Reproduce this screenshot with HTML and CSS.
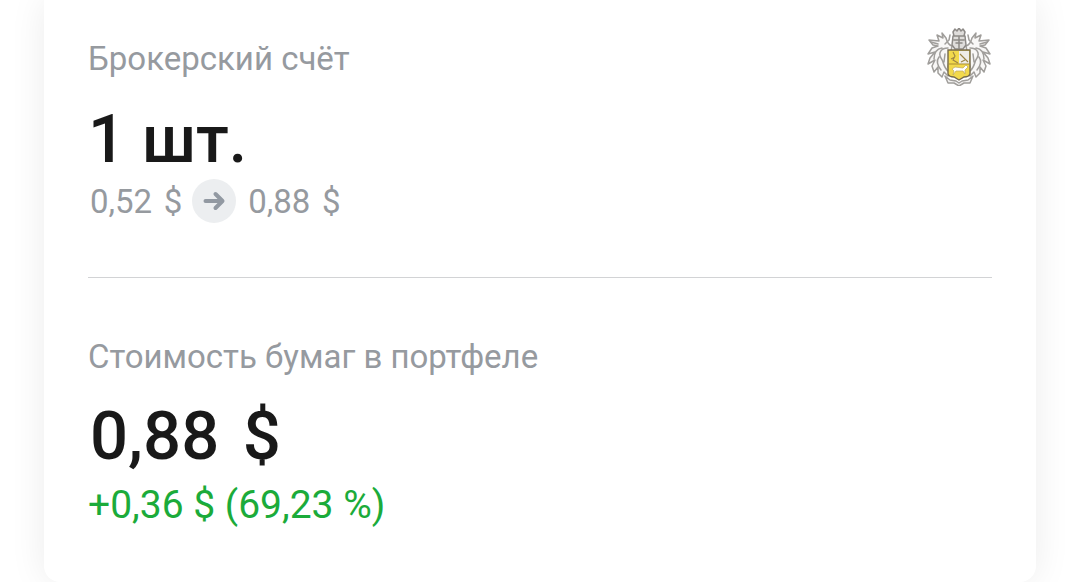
FILE: index.html
```html
<!DOCTYPE html>
<html lang="ru">
<head>
<meta charset="utf-8">
<title>Брокерский счёт</title>
<link rel="stylesheet" href="styles.css">
</head>
<body>
<main class="card">
  <section class="account">
    <div class="account-info">
      <h2 class="label">Брокерский счёт</h2>
      <p class="value count">1 шт.</p>
      <p class="prices">
        <span class="amount">0,52 &#8202;$</span>
        <svg class="arrow" viewBox="0 0 44 44" aria-hidden="true">
          <circle cx="22" cy="22" r="22" fill="#eceef0"/>
          <path d="M13.500 22H30M23.500 15L30.500 22L23.500 29" fill="none" stroke="#9299a2" stroke-width="4" stroke-linecap="round" stroke-linejoin="round"/>
        </svg>
        <span class="amount">0,88 &#8202;$</span>
      </p>
    </div>
    <svg class="crest" viewBox="0 0 64 58" aria-hidden="true">
      <g fill="none" stroke="#a09e9b" stroke-width="1.500" stroke-linejoin="round" stroke-linecap="round">
        <g id="mantle">
          <path fill="#f8f7f6" d="M25 18C22 17 20 14 19 10L15 5L16 10L10 7L12 13L2 12L6 17L11 18L5 20L1 26L8 24L3 30L1 36L8 32L5 38L7 44L11 39L11 45L15 49L17 44L21 48L24 46L21 39Z"/>
          <path d="M21 20C14 20 11 25 14 30C17 34 16 39 21 43M15 20C9 21 7 26 7 31M12 29C9 33 10 37 14 42M18 16L22 12L23 7M4 14L11 16M18 26L17 34"/>
        </g>
        <use href="#mantle" transform="matrix(-1 0 0 1 64 0)"/>
        <path d="M26 4L28 1L30 3L32 0L34 3L36 1L38 4L37 8H27ZM26 8H38L39 17L36 21H28L25 17ZM27 12H37M29 15H35M32 9V20" fill="#dfdddb" stroke="#8d8a87"/>
        <path d="M18 48L23 52L29 53L32 55L35 53L41 52L46 48L43 55L37 55L32 58L27 55L21 55Z" fill="#f3f2f1"/>
      </g>
      <path d="M21 22H43V46Q42 49 37 49L32 52L27 49Q22 49 21 46Z" fill="#f2d94c" stroke="#756a4c" stroke-width="1.400"/>
      <path d="M32 23H42V36H32Z" fill="#efede7"/>
      <path d="M22 36H42" stroke="#a78b35"/>
      <path d="M26 24L28 28L26 32L31 35M24 31L28 29M33 26L38 31L41 34M34 34L38 32" fill="none" stroke="#9b8445" stroke-width="1.100"/>
      <path d="M25 41L28 39L36 40L39 37L41 39L38 42L38 46L36 43L29 43L26 47L27 43Z" fill="#fff" stroke="#bea85b" stroke-width=".7"/>
    </svg>
  </section>
  <section class="portfolio">
    <h2 class="label">Стоимость бумаг в портфеле</h2>
    <p class="value amount">0,88 &#8202;$</p>
    <p class="profit">+0,36 $ (69,23 %)</p>
  </section>
</main>
</body>
</html>
```
FILE: styles.css
```css
* {
  box-sizing: border-box;
}

body {
  margin: 0;
  background: #fff;
  color: #191919;
  font-family: Roboto, "Noto Sans", sans-serif;
  overflow-x: hidden;
}

.card {
  margin: 0 44px;
  padding: 28px 44px 56px;
  border-radius: 0 0 16px 16px;
  background: #fff;
  box-shadow: 0 0 36px rgba(0, 0, 0, 0.08);
}

.account {
  display: flex;
  justify-content: space-between;
  align-items: flex-start;
  padding-bottom: 53px;
  border-bottom: 1px solid #d2d3d5;
}

.label,
.value,
.prices,
.profit {
  margin: 0;
}

.label {
  color: #969a9f;
  font-size: 33px;
  font-weight: 400;
  line-height: 62px;
}

.value {
  font-size: 67px;
  font-weight: 500;
  line-height: 96px;
}

.count {
  padding-top: 12px;
  font-size: 66px;
  line-height: 76px;
}

.amount {
  padding-left: 2px;
}

.prices {
  display: flex;
  align-items: center;
  gap: 10px;
  color: #969a9f;
  font-size: 33px;
  line-height: 44px;
}

.prices .amount {
  padding-top: 2px;
}

.arrow {
  width: 44px;
  height: 44px;
}

.crest {
  flex: none;
  width: 66px;
  height: 58px;
}

.portfolio {
  padding-top: 48px;
}

.profit {
  color: #1bab3a;
  font-size: 39px;
  line-height: 42px;
}
```
